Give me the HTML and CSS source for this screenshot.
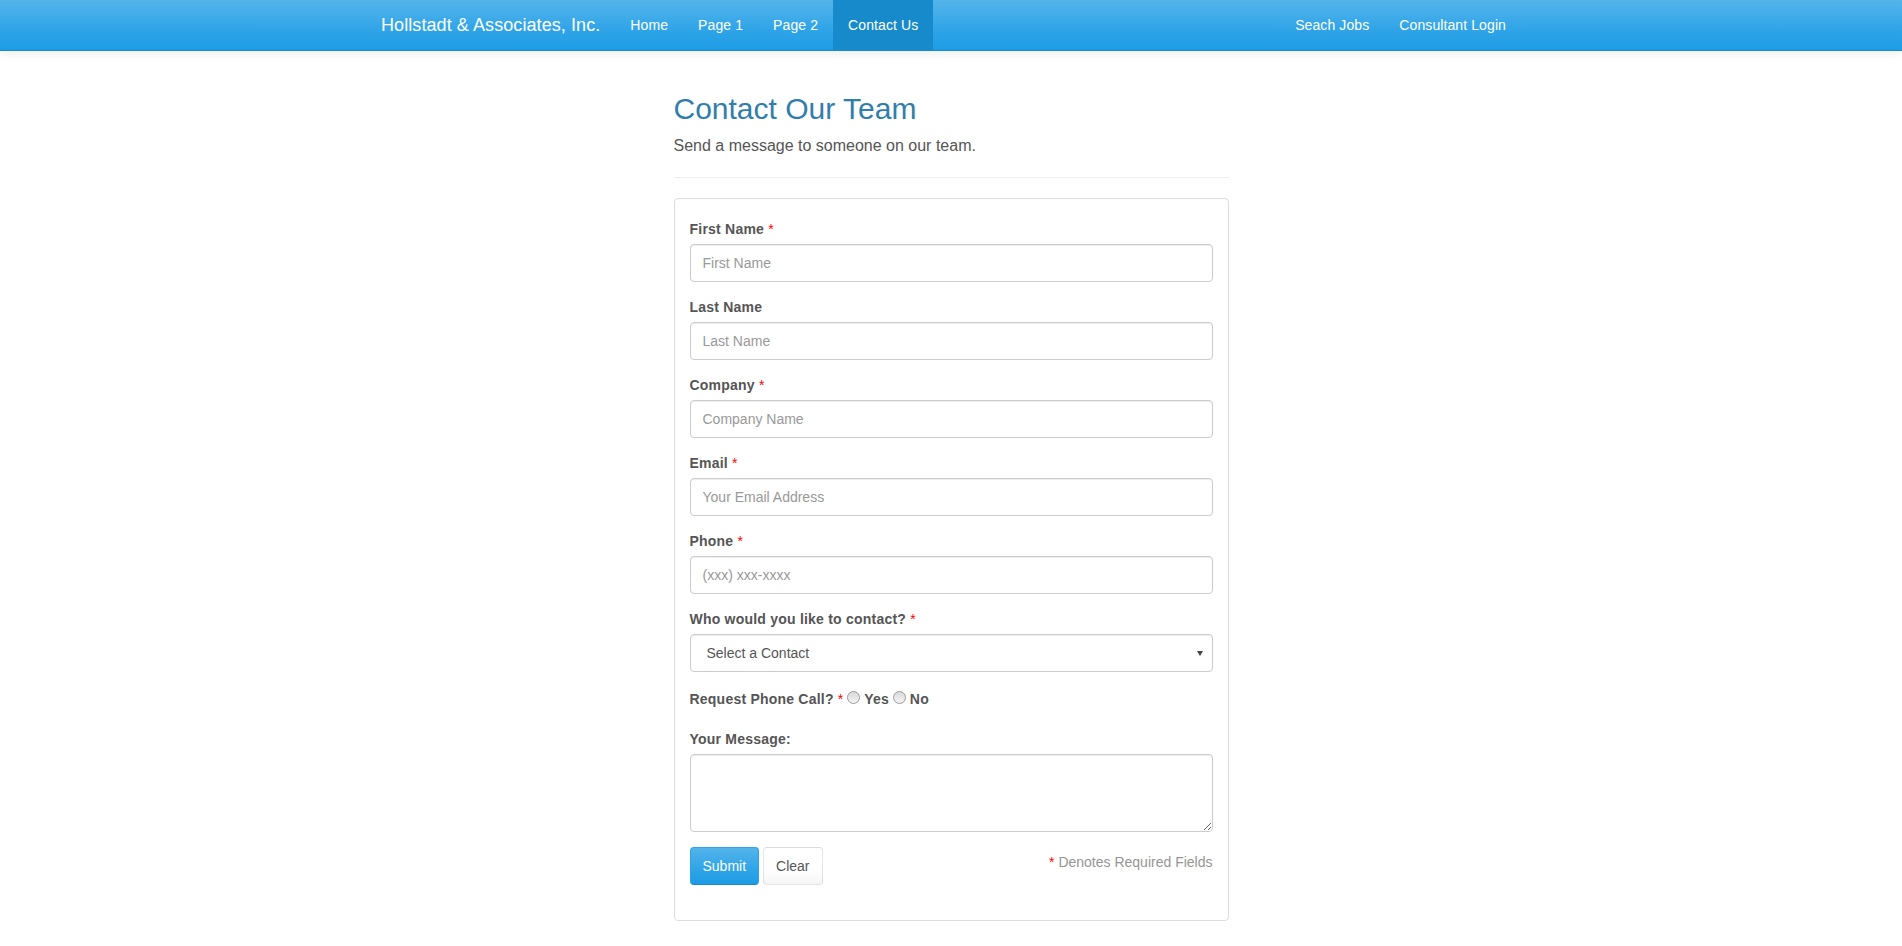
FILE: index.html
```html
<!DOCTYPE html>
<html lang="en">
<head>
<meta charset="utf-8">
<title>Contact Our Team</title>
<link rel="stylesheet" href="styles.css">
</head>
<body>
<nav class="navbar">
  <div class="nav-container">
    <a class="brand" href="#">Hollstadt &amp; Associates, Inc.</a>
    <ul class="nav">
      <li><a href="#">Home</a></li>
      <li><a href="#">Page 1</a></li>
      <li><a href="#">Page 2</a></li>
      <li class="active"><a href="#">Contact Us</a></li>
    </ul>
    <ul class="nav nav-right">
      <li><a href="#">Seach Jobs</a></li>
      <li><a href="#">Consultant Login</a></li>
    </ul>
  </div>
</nav>
<main class="main">
  <div class="page-header">
    <h2>Contact Our Team</h2>
    <p>Send a message to someone on our team.</p>
  </div>
  <form class="contact-panel">
    <div class="form-group">
      <label class="control-label" for="first">First Name <span class="req">*</span></label>
      <input class="form-control" id="first" type="text" placeholder="First Name">
    </div>
    <div class="form-group">
      <label class="control-label" for="last">Last Name</label>
      <input class="form-control" id="last" type="text" placeholder="Last Name">
    </div>
    <div class="form-group">
      <label class="control-label" for="company">Company <span class="req">*</span></label>
      <input class="form-control" id="company" type="text" placeholder="Company Name">
    </div>
    <div class="form-group">
      <label class="control-label" for="email">Email <span class="req">*</span></label>
      <input class="form-control" id="email" type="text" placeholder="Your Email Address">
    </div>
    <div class="form-group">
      <label class="control-label" for="phone">Phone <span class="req">*</span></label>
      <input class="form-control" id="phone" type="text" placeholder="(xxx) xxx-xxxx">
    </div>
    <div class="form-group">
      <label class="control-label" for="contact">Who would you like to contact? <span class="req">*</span></label>
      <div class="select-wrap">
        <select class="form-control select" id="contact">
          <option>Select a Contact</option>
        </select>
        <span class="caret"></span>
      </div>
    </div>
    <div class="form-group">
      <label class="control-label">Request Phone Call? <span class="req">*</span></label> <input class="radio" type="radio" name="call" id="call-yes"> <label class="control-label" for="call-yes">Yes</label> <input class="radio" type="radio" name="call" id="call-no"> <label class="control-label" for="call-no">No</label>
    </div>
    <div class="form-group">
      <label class="control-label" for="message">Your Message:</label>
      <textarea class="form-control textarea" id="message" rows="3"></textarea>
    </div>
    <div class="form-group actions">
      <div class="buttons">
        <button type="button" class="btn btn-primary">Submit</button>
        <button type="button" class="btn btn-default">Clear</button>
      </div>
      <p class="help-block"><span class="req">*</span> Denotes Required Fields</p>
    </div>
  </form>
</main>
</body>
</html>
```

FILE: styles.css
```css
* {
  box-sizing: border-box;
}

html,
body {
  margin: 0;
}

body {
  font-family: "Liberation Sans", Arial, Helvetica, sans-serif;
  font-size: 14px;
  line-height: 20px;
  color: #555555;
  background: #ffffff;
}

/* Navbar */
.navbar {
  height: 51px;
  background-image: linear-gradient(#54b4eb, #2fa4e7 60%, #1d9ce5);
  border-bottom: 1px solid #178acc;
  box-shadow: 0 1px 10px rgba(0, 0, 0, 0.1);
}

.nav-container {
  width: 1170px;
  height: 50px;
  margin: 0 auto;
  padding: 0 15px;
  display: flex;
}

.brand {
  margin-left: -15px;
  padding: 15px;
  height: 50px;
  font-size: 18px;
  line-height: 20px;
  color: #ffffff;
  text-decoration: none;
  letter-spacing: 0.08px;
}

.nav {
  list-style: none;
  margin: 0;
  padding: 0;
  display: flex;
}

.nav a {
  display: block;
  height: 50px;
  padding: 15px;
  line-height: 20px;
  color: #ffffff;
  text-decoration: none;
  letter-spacing: 0.1px;
}

.nav .active a {
  background-color: #178acc;
}

.nav-right {
  margin-left: auto;
}

/* Main */
.main {
  width: 555px;
  margin: 0 auto;
}

.page-header {
  margin: 41px 0 20px;
  padding-bottom: 9px;
  border-bottom: 1px solid #eeeeee;
}

.page-header h2 {
  margin: 0 0 10px;
  font-size: 30px;
  font-weight: 500;
  line-height: 33px;
  color: #317eac;
}

.page-header p {
  margin: 0 0 10px;
  font-size: 16px;
  line-height: 1.428571;
}

.contact-panel {
  border: 1px solid #dddddd;
  border-radius: 4px;
  padding: 20px 15px;
}

.form-group {
  margin-bottom: 15px;
}

.control-label {
  display: inline-block;
  margin-bottom: 5px;
  font-weight: bold;
  letter-spacing: 0.22px;
}

.req {
  color: #ff0000;
  font-weight: normal;
}

.form-control {
  display: block;
  width: 100%;
  height: 38px;
  padding: 8px 12px;
  font-family: inherit;
  font-size: 14px;
  line-height: 20px;
  color: #555555;
  background-color: #ffffff;
  border: 1px solid #cccccc;
  border-radius: 4px;
  box-shadow: inset 0 1px 1px rgba(0, 0, 0, 0.075);
  margin: 0;
}

.form-control::placeholder {
  color: #999999;
  opacity: 1;
}

.select-wrap {
  position: relative;
}

.select {
  appearance: none;
  -webkit-appearance: none;
  padding-left: 16px;
}

.caret {
  position: absolute;
  right: 10px;
  top: 17px;
  width: 0;
  height: 0;
  border-left: 3px solid transparent;
  border-right: 3px solid transparent;
  border-top: 5px solid #444444;
}

.radio {
  -webkit-appearance: none;
  appearance: none;
  width: 13px;
  height: 13px;
  margin: 4px 0 0;
  padding: 0;
  border: 1px solid #9a9a9a;
  border-radius: 50%;
  background: linear-gradient(#d9d9d9, #f4f4f4);
  vertical-align: baseline;
}

.textarea {
  height: 78px;
  resize: vertical;
}

.actions {
  display: flex;
  justify-content: space-between;
  align-items: flex-start;
}

.buttons {
  display: flex;
  gap: 4px;
}

.btn {
  display: inline-block;
  margin: 0;
  padding: 8px 12px;
  font-family: inherit;
  font-size: 14px;
  line-height: 20px;
  border-radius: 4px;
  cursor: pointer;
}

.btn-primary {
  color: #ffffff;
  background-image: linear-gradient(#54b4eb, #2fa4e7 60%, #1d9ce5);
  border: 1px solid #2fa4e7;
  border-bottom-color: #178acc;
}

.btn-default {
  color: #555555;
  background-image: linear-gradient(#ffffff, #ffffff 60%, #f5f5f5);
  border: 1px solid rgba(0, 0, 0, 0.1);
  border-bottom-color: #e6e6e6;
}

.help-block {
  margin: 5px 0 0;
  color: #959595;
}
```
